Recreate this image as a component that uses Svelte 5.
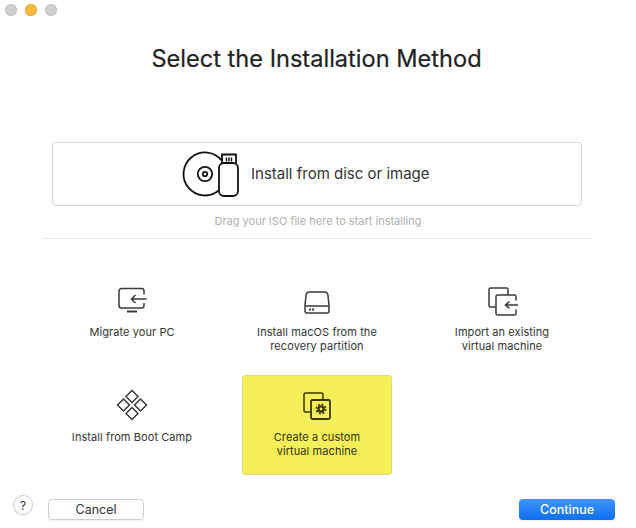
<script>
	const methods = [
		{ id: 'migrate', lines: ['Migrate your PC'] },
		{ id: 'recovery', lines: ['Install macOS from the', 'recovery partition'] },
		{ id: 'import', lines: ['Import an existing', 'virtual machine'] },
		{ id: 'bootcamp', lines: ['Install from Boot Camp'] },
		{ id: 'custom', lines: ['Create a custom', 'virtual machine'] }
	];
	let selected = $state('custom');
</script>

<div class="window">
	<div class="lights">
		<span class="light"></span>
		<span class="light active"></span>
		<span class="light"></span>
	</div>

	<h1>Select the Installation Method</h1>

	<div class="disc-box">
		<svg width="58" height="46" viewBox="0 0 58 46" fill="none" stroke="#111" stroke-width="1.8">
			<path d="M37 39.300A21.500 21.500 0 1 1 40 9.800" />
			<circle cx="23" cy="23" r="7.200" />
			<circle cx="23" cy="23" r="2.200" />
			<path d="M40 12V3.500h14V12" />
			<path d="M44.500 6.500v4M47 6.500v4M49.500 6.500v4" stroke-width="1.400" />
			<path d="M37 17a5 5 0 0 1 5-5h9a5 5 0 0 1 5 5v23a5 5 0 0 1-5 5h-9a5 5 0 0 1-5-5z" />
		</svg>
		<span class="disc-label">Install from disc or image</span>
	</div>
	<p class="hint">Drag your ISO file here to start installing</p>
	<hr />

	<div class="tiles">
		{#each methods as m}
			<button class="tile" class:selected={selected === m.id} onclick={() => (selected = m.id)}>
				<svg class="icon" width="32" height="32" viewBox="0 0 32 32" fill="none" stroke="currentColor" stroke-width="1.500">
					{#if m.id === 'migrate'}
						<path d="M28 10.500V7a2.500 2.500 0 0 0-2.500-2.500h-20A2.500 2.500 0 0 0 3 7v14.500A2.500 2.500 0 0 0 5.500 24h20a2.500 2.500 0 0 0 2.500-2.500V19" />
						<path d="M11 27.500h10" stroke-width="2" />
						<path d="M30.500 15H15.500M19.500 11l-4 4 4 4" />
					{:else if m.id === 'recovery'}
						<path d="M8 8h16a3 3 0 0 1 2.800 2.200L28 21v6a2 2 0 0 1-2 2H6a2 2 0 0 1-2-2v-6l1.200-10.800A3 3 0 0 1 8 8z" />
						<path d="M4 22h24" />
						<path d="M8 25.500h2M11 25.500h2" stroke-width="2" />
					{:else if m.id === 'import'}
						<path d="M10 23H4.500A1.500 1.500 0 0 1 3 21.500v-16A1.500 1.500 0 0 1 4.500 4h16A1.500 1.500 0 0 1 22 5.500V11" />
						<path d="M30 16.500v-4a1.500 1.500 0 0 0-1.500-1.500h-17a1.500 1.500 0 0 0-1.500 1.500v17a1.500 1.500 0 0 0 1.500 1.500h17a1.500 1.500 0 0 0 1.500-1.500v-4" />
						<path d="M32 21H19.500M23.500 17.500l-4 3.500 4 3.500" />
					{:else if m.id === 'bootcamp'}
						<path d="M16 1.500L22 7.500 16 13.500 10 7.500z" />
						<path d="M7.500 10L13.500 16 7.500 22 1.500 16z" />
						<path d="M24.500 10L30.500 16 24.500 22 18.500 16z" />
						<path d="M16 18.500L22 24.500 16 30.500 10 24.500z" />
					{:else}
						<path d="M10 23H4.500A1.500 1.500 0 0 1 3 21.500v-16A1.500 1.500 0 0 1 4.500 4h16A1.500 1.500 0 0 1 22 5.500V11" />
						<rect x="10" y="11" width="19" height="19" rx="1.500" stroke-width="1.800" />
						<circle cx="20" cy="20" r="2.600" stroke-width="2.400" />
						<circle cx="20" cy="20" r="4.600" stroke-width="1.800" stroke-dasharray="1.800 1.810" />
					{/if}
				</svg>
				<span class="label">
					{#each m.lines as line}
						<span>{line}</span>
					{/each}
				</span>
			</button>
		{/each}
	</div>

	<footer>
		<button class="help">?</button>
		<button class="btn">Cancel</button>
		<button class="btn primary">Continue</button>
	</footer>
</div>

<style>
	:global(body) {
		background: #fff;
	}
	.window {
		width: 636px;
		height: 528px;
		box-sizing: border-box;
		display: flex;
		flex-direction: column;
		overflow: hidden;
		font-family: Inter, "Liberation Sans", sans-serif;
		color: #222;
		background: #fff;
	}
	.lights {
		display: flex;
		gap: 8px;
		padding: 4px 0 0 5px;
	}
	.light {
		width: 12px;
		height: 12px;
		border-radius: 50%;
		background: #d0d0d0;
		box-shadow: inset 0 0 0 1px #c4c4c4;
	}
	.light.active {
		background: #fdbc40;
		box-shadow: inset 0 0 0 1px #eaa92e;
	}
	h1 {
		margin: 25px 3px 0 0;
		text-align: center;
		font-size: 23.600px;
		line-height: 36px;
		font-weight: 400;
		color: #222;
		-webkit-text-stroke: 0.2px #222;
	}
	.disc-box {
		margin: 65px 0 0 52px;
		width: 530px;
		height: 64px;
		box-sizing: border-box;
		border: 1px solid #d6d6d6;
		border-radius: 4px;
		padding-left: 129px;
		display: flex;
		align-items: center;
		gap: 11px;
		font-size: 15px;
		color: #333;
	}
	.disc-label {
		margin-bottom: 2px;
	}
	.hint {
		margin: 7px 0 0;
		text-align: center;
		font-size: 11px;
		line-height: 16px;
		color: #b0b0b0;
	}
	hr {
		margin: 9px 44px 0 42px;
		border: 0;
		border-top: 1px solid #e6e6e6;
	}
	.tiles {
		display: grid;
		grid-template-columns: repeat(3, 150px);
		grid-auto-rows: 100px;
		column-gap: 35px;
		row-gap: 5px;
		margin: 31px 0 0 57px;
	}
	.tile {
		appearance: none;
		background: none;
		border: 1px solid transparent;
		border-radius: 3px;
		padding: 13px 0 0;
		margin: 0;
		display: flex;
		flex-direction: column;
		align-items: center;
		font: inherit;
		font-size: 11px;
		letter-spacing: 0.08px;
		color: #333;
		cursor: pointer;
	}
	.tile.selected {
		background: #f5ef58;
		border-color: #d4dc8c;
		color: #33300a;
	}
	.icon {
		color: #3a3a3a;
	}
	.selected .icon {
		color: #3a3608;
	}
	.label {
		margin-top: 9px;
		display: flex;
		flex-direction: column;
		line-height: 14px;
	}
	footer {
		margin-top: auto;
		display: flex;
		align-items: flex-end;
		padding: 0 21px 8px 13px;
	}
	.help {
		width: 20px;
		height: 20px;
		padding: 0;
		border-radius: 50%;
		border: 1px solid #cfcfcf;
		background: #fff;
		box-shadow: 0 1px 1px rgba(0, 0, 0, 0.08);
		font: inherit;
		font-size: 12px;
		color: #333;
		margin-right: 15px;
		margin-bottom: 5px;
	}
	.btn {
		width: 96px;
		height: 21px;
		padding: 0;
		border-radius: 4px;
		border: 1px solid #cdcdcd;
		background: #fff;
		box-shadow: 0 1px 1px rgba(0, 0, 0, 0.06);
		font: inherit;
		font-size: 12.500px;
		color: #333;
	}
	.btn.primary {
		margin-left: auto;
		border: 0;
		background: linear-gradient(#3f95fb, #0f6ff0);
		color: #fff;
		font-weight: 500;
	}
</style>
